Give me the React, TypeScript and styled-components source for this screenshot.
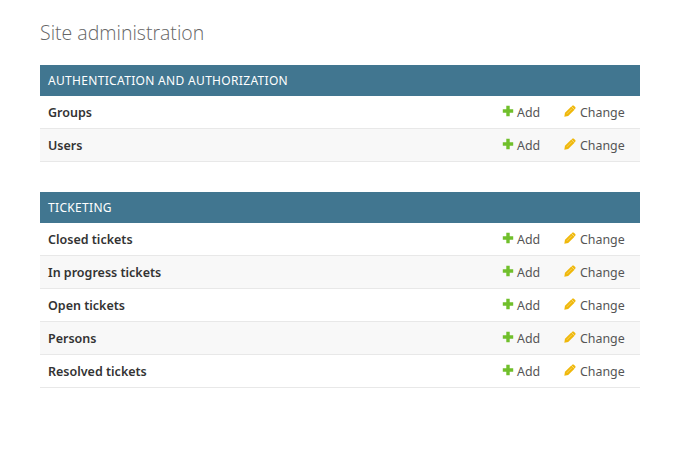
import styled, { createGlobalStyle } from 'styled-components';

const GlobalStyle = createGlobalStyle`
  html, body {
    margin: 0;
    padding: 0;
    background: #ffffff;
    font-family: 'Noto Sans', 'DejaVu Sans', sans-serif;
  }
`;

const MODULES = [
  {
    name: 'Authentication and Authorization',
    models: ['Groups', 'Users'],
  },
  {
    name: 'Ticketing',
    models: ['Closed tickets', 'In progress tickets', 'Open tickets', 'Persons', 'Resolved tickets'],
  },
];

const Page = styled.div`
  padding: 20px 40px;
  width: 600px;
`;

const Title = styled.h1`
  margin: 0 0 20px;
  font-family: 'Open Sans', 'Noto Sans', sans-serif;
  font-size: 19.5px;
  line-height: 25px;
  font-weight: 300;
  color: #666666;
`;

const Modules = styled.div`
  display: flex;
  flex-direction: column;
  gap: 30px;
`;

const Caption = styled.div`
  height: 31px;
  padding: 0 8px;
  display: flex;
  align-items: center;
  background: #417690;
  color: #ffffff;
  font-size: 12px;
  letter-spacing: 0.32px;
  text-transform: uppercase;
`;

const Row = styled.div<{ $alt: boolean }>`
  height: 32px;
  display: flex;
  align-items: center;
  padding: 0 16px 0 8px;
  background: ${p => (p.$alt ? '#f8f8f8' : '#ffffff')};
  border-bottom: 1px solid #e8e8e8;
`;

const ModelName = styled.span`
  flex: 1;
  font-size: 12.5px;
  font-weight: 600;
  color: #333333;
`;

const Action = styled.span<{ $width: number; $gap: number }>`
  width: ${p => p.$width}px;
  display: flex;
  align-items: center;
  gap: ${p => p.$gap}px;
  font-size: 12.4px;
  color: #555555;
`;

const Icon = styled.svg`
  width: 12px;
  height: 12px;
  flex: none;
  position: relative;
  top: -1px;
`;

function AddIcon() {
  return (
    <Icon viewBox="0 0 12 12">
      <path d="M4.300 .8h3.400v3.500h3.500v3.400H7.700v3.500H4.300V7.700H.8V4.300h3.500z" fill="#70bf2b" />
    </Icon>
  );
}

function ChangeIcon() {
  return (
    <Icon viewBox="0 0 12 12">
      <path d="M.3 11.700l.7-3.900 6.300-6.300 3.200 3.200-6.300 6.300z" fill="#efb80b" />
      <path d="M8.200.8c.5-.5 1.200-.5 1.700 0l1.300 1.300c.5.500.5 1.200 0 1.700l-.6.6-3-3z" fill="#efb80b" />
      <path d="M2.800 8.900l5.200-5.200" stroke="#f7d060" strokeWidth=".9" fill="none" />
    </Icon>
  );
}

export default function App() {
  return (
    <Page>
      <GlobalStyle />
      <Title>Site administration</Title>
      <Modules>
        {MODULES.map(module => (
          <section key={module.name}>
            <Caption>{module.name}</Caption>
            {module.models.map((model, i) => (
              <Row key={model} $alt={i % 2 === 1}>
                <ModelName>{model}</ModelName>
                <Action $width={62} $gap={3}>
                  <AddIcon />
                  Add
                </Action>
                <Action $width={60} $gap={4}>
                  <ChangeIcon />
                  Change
                </Action>
              </Row>
            ))}
          </section>
        ))}
      </Modules>
    </Page>
  );
}
